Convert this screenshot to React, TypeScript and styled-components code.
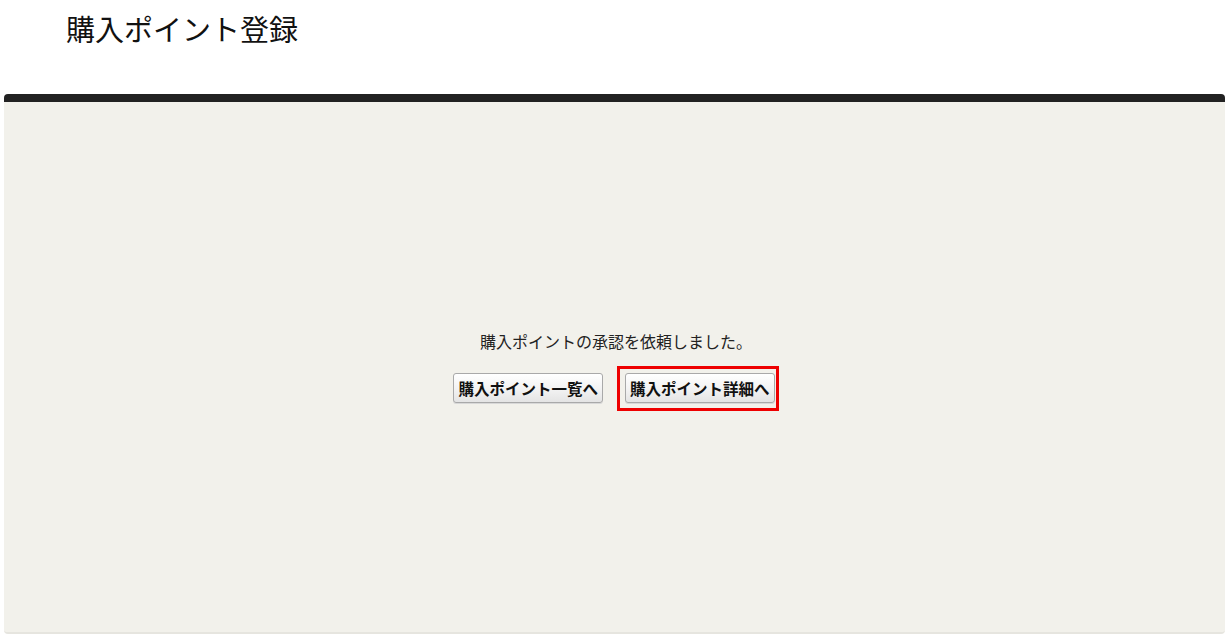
import {FC} from "react";
import styled, {createGlobalStyle} from "styled-components";

const GlobalStyle = createGlobalStyle`
  html, body {
    margin: 0;
    padding: 0;
    background: #ffffff;
    font-family: "Liberation Sans", "Noto Sans CJK JP", sans-serif;
  }
`;

const Page = styled.div`
  width: 1232px;
  height: 643px;
  display: flex;
  flex-direction: column;
  box-sizing: border-box;
  padding: 0 7px 9px 4px;
`;

const Header = styled.div`
  height: 94px;
  box-sizing: border-box;
  padding: 8px 0 0 62px;
`;

const Title = styled.h1`
  margin: 0;
  font-family: "Noto Sans CJK JP", sans-serif;
  font-size: 29px;
  font-weight: 400;
  line-height: 40px;
  color: #111111;
`;

const Panel = styled.div`
  flex: 1;
  display: flex;
  flex-direction: column;
  background: #f2f1eb;
  border-radius: 4px;
  border-top: 8px solid #222222;
  border-bottom: 2px solid #e6e5df;
  overflow: hidden;
`;

const Body = styled.div`
  flex: 1;
  display: flex;
  flex-direction: column;
  align-items: center;
  padding-top: 229px;
  padding-right: 5px;
`;

const Message = styled.p`
  margin: 0;
  padding-left: 8px;
  font-family: "Noto Sans CJK JP", sans-serif;
  font-size: 16px;
  line-height: 20px;
  color: #222222;
`;

const Actions = styled.div`
  display: flex;
  align-items: center;
  gap: 10px;
  margin-top: 15px;
`;

const Highlight = styled.div`
  border: 3px solid ${(props: {active?: boolean}) => props.active ? "#ee0000" : "transparent"};
  padding: 4px 1px 5px 5px;
`;

const Button = styled.button`
  display: block;
  height: 30px;
  padding: 0 4px;
  font-family: "Noto Sans CJK JP", sans-serif;
  font-size: 15.5px;
  font-weight: 700;
  color: #111111;
  background: linear-gradient(#ffffff, #f1f1f1 60%, #e4e4e4);
  border: 1px solid #a9a9a9;
  border-radius: 3px;
  box-shadow: 0 1px 0 #d8d8d8;
  cursor: pointer;
`;

interface ActionProps {
  label: string;
  active?: boolean;
}

const Action: FC<ActionProps> = (props) => {
  return (
    <Highlight active={props.active}>
      <Button type="button">{props.label}</Button>
    </Highlight>
  );
}

const App: FC = () => {
  return (
    <>
      <GlobalStyle />
      <Page>
        <Header>
          <Title>購入ポイント登録</Title>
        </Header>
        <Panel>
          <Body>
            <Message>購入ポイントの承認を依頼しました。</Message>
            <Actions>
              <Action label="購入ポイント一覧へ" />
              <Action label="購入ポイント詳細へ" active />
            </Actions>
          </Body>
        </Panel>
      </Page>
    </>
  );
}

export default App;
